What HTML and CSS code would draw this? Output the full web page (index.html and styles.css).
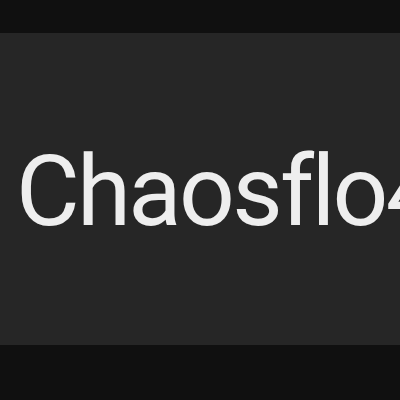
FILE: index.html
```html
<!DOCTYPE html>
<html lang="en">
<head>
  <meta charset="UTF-8" />
  <meta name="viewport" content="width=device-width, initial-scale=1.0"/>
  <title>Chaosflo44</title>
  <link rel="stylesheet" href="styles.css">
</head>
<body>

  <div class="page">
    <div class="banner">
      <p class="name">Chaosflo44</p>
    </div>
  </div>

</body>
</html>
```

FILE: styles.css
```css
body {
  font-family: Roboto, "Noto Sans", Arial, sans-serif;
  background-color: #101010;
  color: #eeeeee;
  margin: 0;
  padding: 0;
}

.page {
  height: 400px;
  padding-top: 33px;
  box-sizing: border-box;
  overflow: hidden;
}

.banner {
  height: 312px;
  box-sizing: border-box;
  background-color: #262626;
  display: flex;
  align-items: center;
  padding: 6px 0 0 16px;
  overflow: hidden;
}

.name {
  font-size: 98px;
  letter-spacing: -2.7px;
  margin: 0;
  white-space: nowrap;
  line-height: 1;
}
```
